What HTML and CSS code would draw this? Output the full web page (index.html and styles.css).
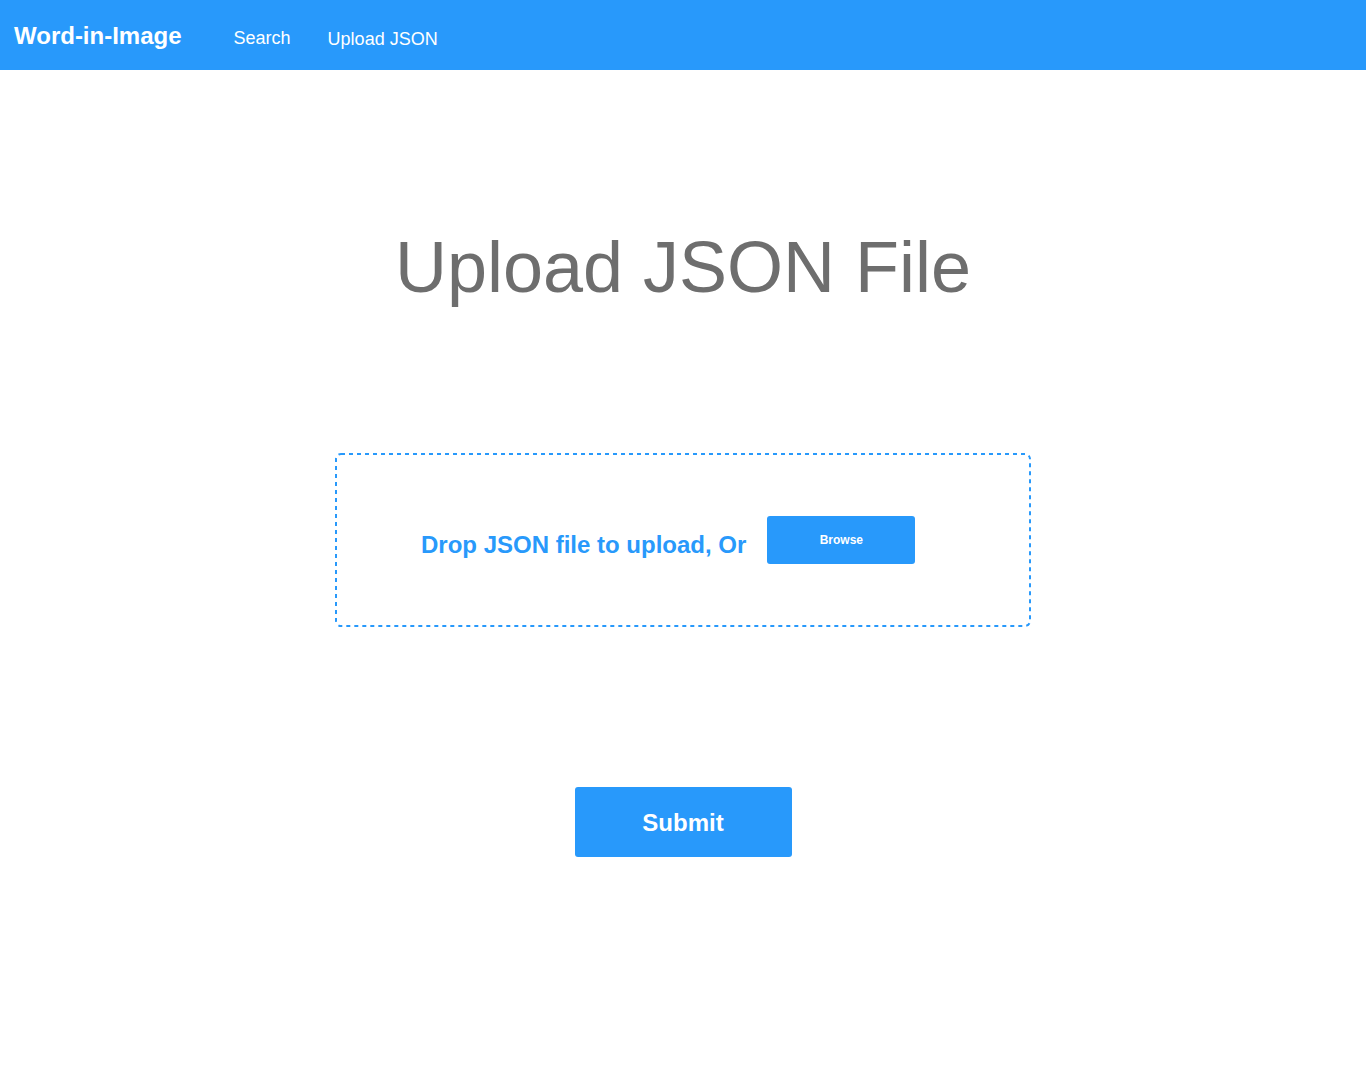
FILE: index.html
```html
<!DOCTYPE html>
<html lang="en">
<head>
<meta charset="utf-8">
<title>Word-in-Image</title>
<link rel="stylesheet" href="styles.css">
</head>
<body>
<nav class="navbar">
  <a class="brand" href="#">Word-in-Image</a>
  <a class="nav-link nav-search" href="#">Search</a>
  <a class="nav-link nav-upload" href="#">Upload JSON</a>
</nav>
<main class="content">
  <h1 class="title">Upload JSON File</h1>
  <div class="dropzone">
    <svg class="dz-border" width="696" height="174" viewBox="0 0 696 174" aria-hidden="true">
      <rect x="1" y="1" width="694" height="172" rx="5" ry="5" fill="none" stroke="#2899fb" stroke-width="2" stroke-dasharray="4 4"/>
    </svg>
    <span class="drop-text">Drop JSON file to upload, Or</span>
    <button class="browse" type="button">Browse</button>
  </div>
  <button class="submit" type="button">Submit</button>
</main>
</body>
</html>
```
FILE: styles.css
```css
* { box-sizing: border-box; }
html, body { margin: 0; padding: 0; background: #fff; }
body { font-family: "Liberation Sans", Arial, Helvetica, sans-serif; }

.navbar {
  height: 70px;
  background: #2899fb;
  display: flex;
  align-items: center;
  padding-left: 14px;
}
.navbar a { color: #fff; text-decoration: none; }
.brand {
  font-weight: bold;
  font-size: 24px;
  line-height: 28px;
  margin-top: 2px;
}
.nav-link {
  font-size: 18px;
  line-height: 22px;
}
.nav-search { margin-left: 52px; margin-top: 6px; }
.nav-upload { margin-left: 37px; margin-top: 8px; }

.content {
  display: flex;
  flex-direction: column;
  align-items: center;
}
.title {
  margin: 157px 0 0 0;
  font-size: 72px;
  line-height: 80px;
  font-weight: normal;
  color: #6e6e6e;
}
.dropzone {
  position: relative;
  margin-top: 146px;
  width: 696px;
  height: 174px;
  display: flex;
  align-items: center;
  padding-left: 86px;
}
.dz-border {
  position: absolute;
  left: 0;
  top: 0;
  pointer-events: none;
}
.drop-text {
  color: #2899fb;
  font-weight: bold;
  font-size: 24px;
  line-height: 28px;
  margin-top: 10px;
}
.browse {
  margin-left: 21px;
  margin-top: 0;
  width: 148px;
  height: 48px;
  background: #2899fb;
  color: #fff;
  border: none;
  border-radius: 3px;
  font-family: "Liberation Sans", Arial, sans-serif;
  font-weight: bold;
  font-size: 12px;
  padding: 0;
}
.submit {
  margin-top: 160px;
  width: 217px;
  height: 70px;
  background: #2899fb;
  color: #fff;
  border: none;
  border-radius: 3px;
  font-family: "Liberation Sans", Arial, sans-serif;
  font-weight: bold;
  font-size: 24px;
  padding: 2px 0 0 0;
}
```
